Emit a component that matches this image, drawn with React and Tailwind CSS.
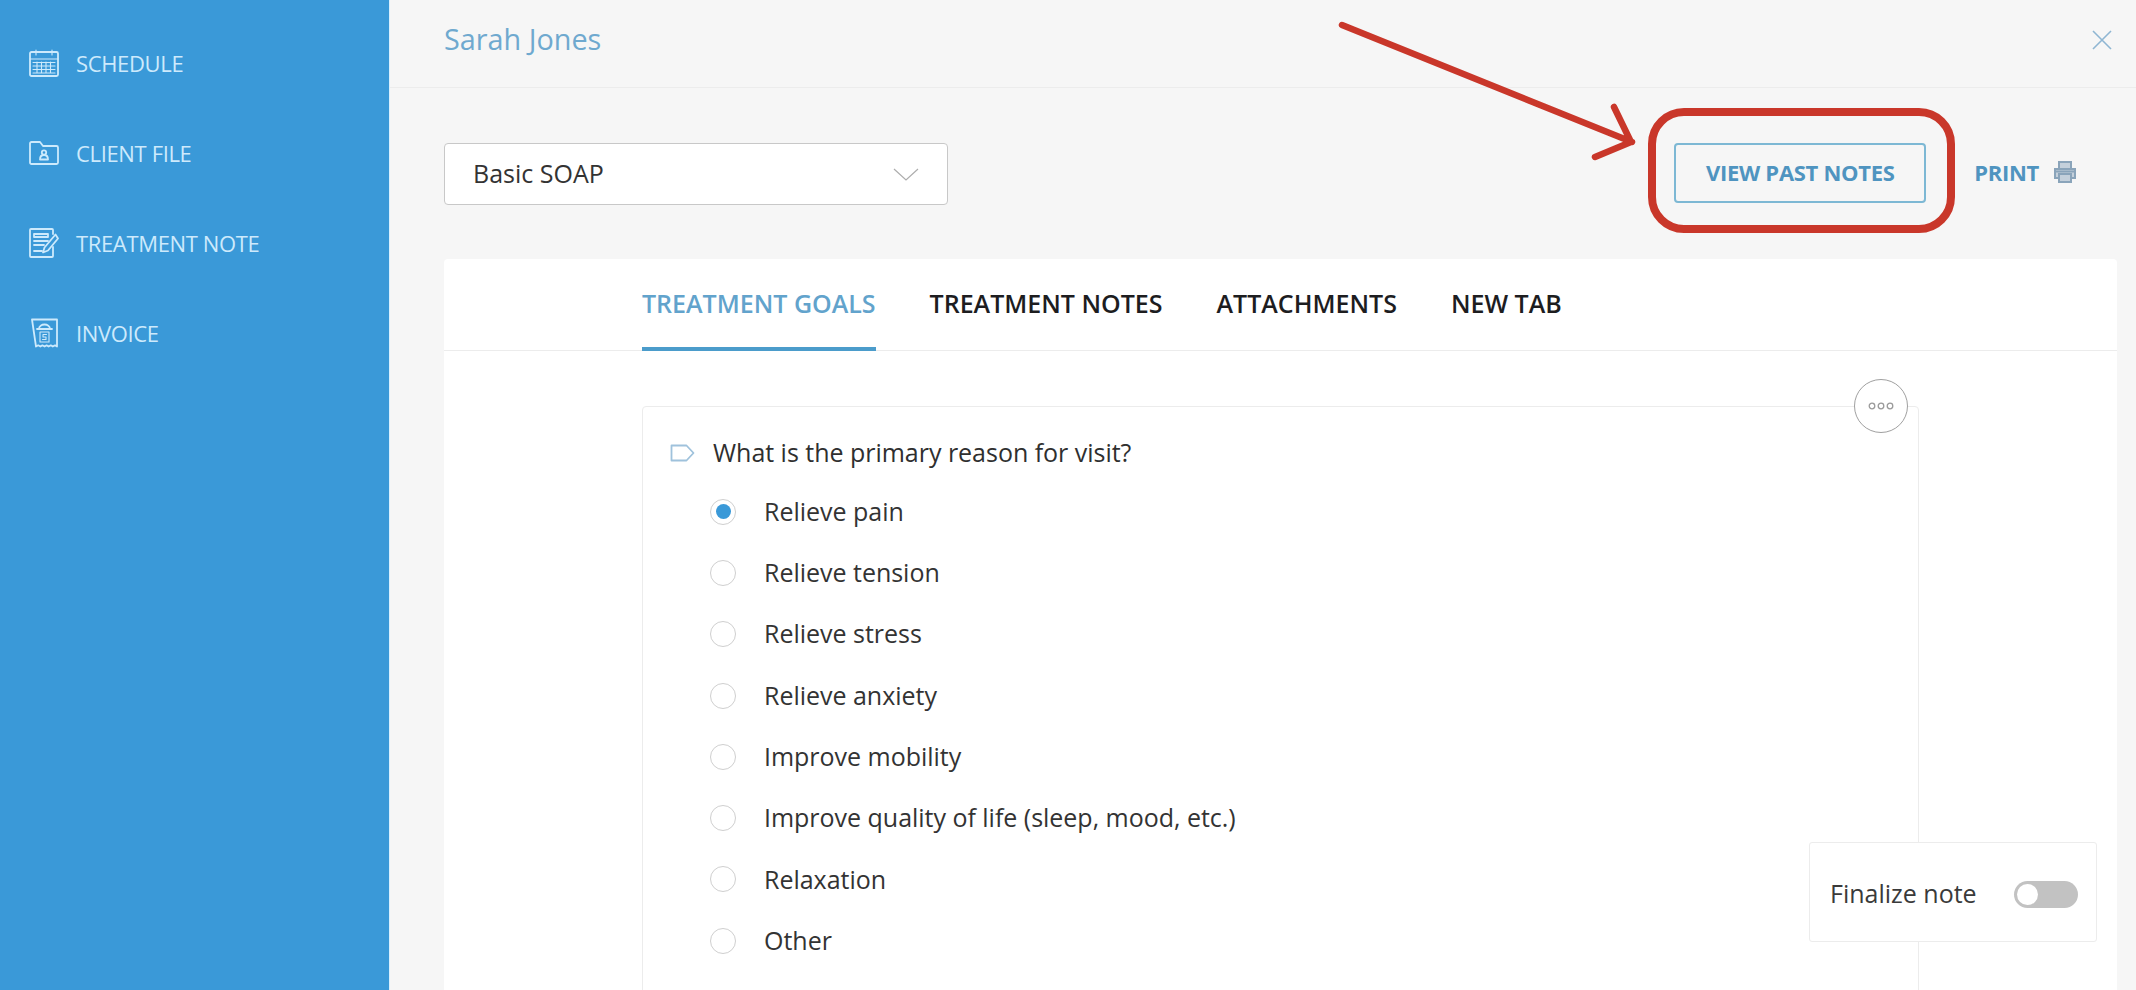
import React from "react";

const NavIcon = ({ name }) => {
  const common = { fill: "none", stroke: "#cdeafc", strokeWidth: 1.8, strokeLinejoin: "round", strokeLinecap: "round" };
  if (name === "calendar")
    return (
      <svg width="30" height="28" viewBox="0 0 30 28" {...common}>
        <rect x="1" y="3" width="28" height="24" rx="1.5" />
        <path d="M1 10h28M7 1v5M23 1v5M4 13.5h22M4 17h22M4 20.5h22M4 24h22M8 13v11M12.500 13v11M17 13v11M21.500 13v11" strokeWidth="1.1" />
      </svg>
    );
  if (name === "folder")
    return (
      <svg width="30" height="24" viewBox="0 0 30 24" {...common}>
        <path d="M1 21.500V2.500A1.500 1.500 0 0 1 2.500 1h8.500l3 4h13.500A1.500 1.500 0 0 1 29 6.500v15a1.500 1.500 0 0 1-1.500 1.500h-25A1.500 1.500 0 0 1 1 21.500z" />
        <circle cx="15" cy="11.500" r="2.200" />
        <path d="M11 18.500c0-6 8-6 8 0z" />
      </svg>
    );
  if (name === "note")
    return (
      <svg width="30" height="30" viewBox="0 0 30 30" {...common}>
        <path d="M24 19v9a1 1 0 0 1-1 1H2a1 1 0 0 1-1-1V2a1 1 0 0 1 1-1h21a1 1 0 0 1 1 1v4" />
        <path d="M5 6h14v3H5zM5 13h14M5 17h10M5 23h8" />
        <path d="M28 6.500l-11 13-1.500 5 5-2 10-12z" transform="translate(-1.500 0)" />
      </svg>
    );
  return (
    <svg width="27" height="30" viewBox="0 0 27 30" {...common}>
      <path d="M1 1.500h25v27l-2-1.200-2.200 1.200-2-1.200-2.200 1.200-2-1.200-2 1.200-2.200-1.200-2 1.200-2.200-1.200-2.200 1.200z" />
      <path d="M8 11c0-6 11-6 11 0zM6 11h15" />
      <rect x="9" y="14" width="9" height="10" strokeWidth="1.100" />
      <path d="M15.500 16.500h-3.500v2.500h3v2.500h-3.500" strokeWidth="1.100" />
    </svg>
  );
};

const navItems = [
  ["calendar", "SCHEDULE"],
  ["folder", "CLIENT FILE"],
  ["note", "TREATMENT NOTE"],
  ["invoice", "INVOICE"],
];

const tabs = ["TREATMENT GOALS", "TREATMENT NOTES", "ATTACHMENTS", "NEW TAB"];

const options = [
  "Relieve pain",
  "Relieve tension",
  "Relieve stress",
  "Relieve anxiety",
  "Improve mobility",
  "Improve quality of life (sleep, mood, etc.)",
  "Relaxation",
  "Other",
];

const Radio = ({ checked }) => (
  <span className="flex h-[26px] w-[26px] shrink-0 items-center justify-center rounded-full border border-[#cfcfcf] bg-white">
    {checked && <span className="h-[15px] w-[15px] rounded-full bg-[#3a99d8]" />}
  </span>
);

export default function App() {
  return (
    <div className="relative flex h-[990px] w-[2136px] overflow-hidden bg-[#f6f6f6] font-['Open_Sans',sans-serif]">
      <aside className="w-[389px] shrink-0 bg-[#3a99d8] px-[29px] pt-[18px]">
        {navItems.map(([icon, label]) => (
          <div key={label} className="flex h-[90px] items-center gap-[17px]">
            <span className="flex w-[30px] justify-center">
              <NavIcon name={icon} />
            </span>
            <span className="text-[22px] tracking-[-0.35px] text-[#cdeafc]">{label}</span>
          </div>
        ))}
      </aside>

      <main className="flex min-w-0 flex-1 flex-col border-l border-[#d8f0ff]">
        <header className="flex h-[88px] shrink-0 items-center justify-between border-b border-[#ececec] pb-[8px] pl-[54px] pr-[24px]">
          <h1 className="text-[28.800px] leading-none text-[#6fa9cf]">Sarah Jones</h1>
          <svg width="20" height="20" viewBox="0 0 20 20" fill="none" stroke="#8fb6d3" strokeWidth="1.600">
            <path d="M1 1l18 18M19 1L1 19" />
          </svg>
        </header>

        <div className="flex items-start pl-[54px] pr-[59px] pt-[55px]">
          <div className="flex h-[62px] w-[504px] items-center justify-between rounded-[4px] border border-[#c8c8c8] bg-white pl-[28px] pr-[28px]">
            <span className="text-[25px] text-[#333333]">Basic SOAP</span>
            <svg width="26" height="13" viewBox="0 0 26 13" fill="none" stroke="#adadad" strokeWidth="1.200">
              <path d="M1 1l12 11L25 1" />
            </svg>
          </div>
          <button className="ml-auto flex h-[60px] w-[252px] items-center justify-center rounded-[4px] border-2 border-[#7db8d4] pb-[2px] text-[22px] font-bold tracking-[-0.3px] text-[#4f94c0]">
            VIEW PAST NOTES
          </button>
          <div className="ml-[48px] flex h-[60px] items-center gap-[14px] pb-[2px]">
            <span className="text-[22px] font-bold tracking-[-0.3px] text-[#4f94c0]">PRINT</span>
            <svg width="24" height="24" viewBox="0 0 24 24" fill="#c4d0db" stroke="#8aa4ba" strokeWidth="2">
              <path d="M6 8V2h12v6M5 18H2V9h20v9h-3" />
              <path d="M6 14h12v8H6zM3 11.500h18" />
            </svg>
          </div>
        </div>

        <section className="ml-[54px] mr-[19px] mt-[54px] flex-1 rounded-t-[4px] bg-white">
          <nav className="flex h-[92px] gap-[54px] border-b border-[#ececec] pl-[198px]">
            {tabs.map((tab, i) => (
              <div
                key={tab}
                className={
                  i === 0
                    ? "flex h-[92px] items-center border-b-[4px] border-[#4b9ccb] pt-[2px] text-[25px] font-semibold text-[#62a3cc]"
                    : "flex h-[92px] items-center pb-[2px] text-[25px] font-semibold text-[#1d1d1f]"
                }
              >
                {tab}
              </div>
            ))}
          </nav>

          <div className="relative ml-[198px] mt-[55px] w-[1277px] rounded-[4px] border border-[#ececec] pl-[27px] pt-[26px]">
            <button className="absolute -top-[28px] right-[10px] flex h-[54px] w-[54px] items-center justify-center rounded-full border-[1.500px] border-[#a0a0a0] bg-white">
              <svg width="26" height="8" viewBox="0 0 26 8" fill="none" stroke="#9a9a9a" strokeWidth="1.300">
                <circle cx="4" cy="4" r="2.800" />
                <circle cx="13" cy="4" r="2.800" />
                <circle cx="22" cy="4" r="2.800" />
              </svg>
            </button>
            <div className="flex h-[40px] items-center gap-[18px]">
              <svg width="25" height="18" viewBox="0 0 25 18" fill="none" stroke="#9fc2dc" strokeWidth="1.800" strokeLinejoin="round">
                <path d="M1.500 1.500h15l7 7.500-7 7.500h-15z" />
              </svg>
              <span className="text-[25px] tracking-[-0.02px] text-[#2f2f2f]">What is the primary reason for visit?</span>
            </div>
            <div className="ml-[40px] mt-[8px] pb-[40px]">
              {options.map((opt, i) => (
                <div key={opt} className="flex h-[61.300px] items-center gap-[28px]">
                  <Radio checked={i === 0} />
                  <span className="text-[25px] tracking-[-0.02px] text-[#333333]">{opt}</span>
                </div>
              ))}
            </div>
          </div>
        </section>
      </main>

      <div className="absolute left-[1809px] top-[842px] flex h-[100px] w-[288px] items-center justify-between rounded-[3px] border border-[#ececec] bg-white pl-[20px] pr-[18px] pt-[4px]">
        <span className="text-[25px] text-[#3a3a3a]">Finalize note</span>
        <span className="flex h-[27px] w-[64px] items-center rounded-full bg-[#c2c2c2] pl-[3px]">
          <span className="h-[21px] w-[21px] rounded-full bg-white" />
        </span>
      </div>

      <div className="absolute left-[1648px] top-[108px] h-[125px] w-[307px] rounded-[36px] border-[8px] border-[#c9372a]" />
      <svg className="absolute left-[1335px] top-[18px]" width="310" height="150" viewBox="0 0 310 150" fill="none" stroke="#c9372a" strokeWidth="6.500" strokeLinecap="round" strokeLinejoin="round">
        <path d="M7 7l290 117M279 89l17 35-36 15" />
      </svg>
    </div>
  );
}
